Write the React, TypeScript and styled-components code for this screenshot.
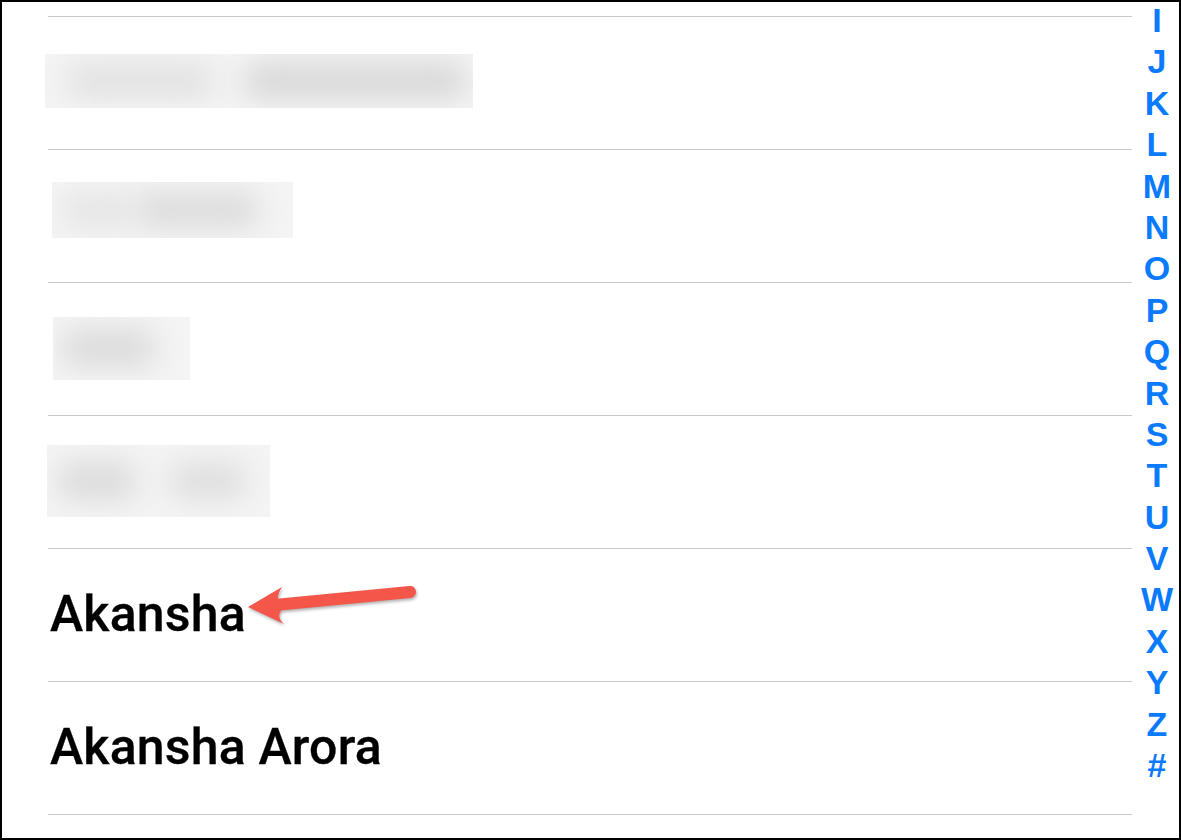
import React from "react";
import styled, { createGlobalStyle } from "styled-components";

const Global = createGlobalStyle`
  html, body { margin: 0; padding: 0; background: #fff; }
  body { font-family: "Liberation Sans", Arial, sans-serif; }
`;

const Frame = styled.div`
  box-sizing: border-box;
  width: 1181px;
  height: 840px;
  border: 2px solid #000;
  background: #fff;
  display: flex;
  overflow: hidden;
`;

const List = styled.div`
  width: 1084px;
  margin-left: 46px;
  padding-top: 14px;
  display: flex;
  flex-direction: column;
`;

const Row = styled.div`
  position: relative;
  box-sizing: border-box;
  height: 133px;
  flex: none;
  border-top: 1px solid #c8c8cb;
  display: flex;
  align-items: center;
  &:last-child {
    height: 134px;
    border-bottom: 1px solid #c8c8cb;
  }
`;

const Name = styled.span`
  font-family: Roboto, "Liberation Sans", sans-serif;
  font-weight: 500;
  font-size: 50px;
  line-height: 1;
  color: #000;
  margin-left: 2px;
  margin-top: -2px;
  letter-spacing: 0.2px;
  -webkit-text-stroke: 0.3px #000;
`;

const BlurBox = styled.div<{ $w: number; $h: number; $x: number; $y: number }>`
  width: ${(p) => p.$w}px;
  height: ${(p) => p.$h}px;
  margin-left: ${(p) => p.$x}px;
  margin-top: ${(p) => p.$y}px;
  background: #f4f4f4;
  overflow: hidden;
  display: flex;
  align-items: center;
`;

const Blob = styled.span<{ $w: number; $h: number; $gap: number; $c: string }>`
  flex: none;
  width: ${(p) => p.$w}px;
  height: ${(p) => p.$h}px;
  margin-left: ${(p) => p.$gap}px;
  background: ${(p) => p.$c};
  border-radius: 18px;
  filter: blur(14px);
`;

const Index = styled.div`
  width: 47px;
  padding-left: 3px;
  box-sizing: border-box;
  margin-top: -2px;
  display: flex;
  flex-direction: column;
  align-items: center;
`;

const Letter = styled.span`
  font-family: "Liberation Sans", Arial, sans-serif;
  font-weight: 700;
  font-size: 34px;
  line-height: 41.4px;
  height: 41.4px;
  color: #0a7aff;
`;

const ArrowSvg = styled.svg`
  position: absolute;
  left: 192px;
  top: 26px;
  overflow: visible;
  filter: drop-shadow(1px 2px 1.5px rgba(0, 0, 0, 0.3));
`;

const letters = "IJKLMNOPQRSTUVWXYZ#".split("");

function Arrow() {
  return (
    <ArrowSvg width="190" height="60" viewBox="0 0 190 60">
      <line x1="40" y1="29.5" x2="170" y2="17" stroke="#f4574a" strokeWidth="12" strokeLinecap="round" />
      <path d="M8 32 L42 12 Q35 22 40 29 L41 36 Q36 42 44 49 Z" fill="#f4574a" />
    </ArrowSvg>
  );
}

export default function App() {
  return (
    <>
      <Global />
      <Frame>
        <List>
          <Row>
            <BlurBox $w={428} $h={54} $x={-3} $y={-5}>
              <Blob $w={150} $h={36} $gap={20} $c="#e2e2e2" />
              <Blob $w={225} $h={38} $gap={28} $c="#d9d9d9" />
            </BlurBox>
          </Row>
          <Row>
            <BlurBox $w={241} $h={56} $x={4} $y={-12}>
              <Blob $w={75} $h={34} $gap={8} $c="#e5e5e5" />
              <Blob $w={125} $h={36} $gap={0} $c="#dcdcdc" />
            </BlurBox>
          </Row>
          <Row>
            <BlurBox $w={137} $h={63} $x={5} $y={-2}>
              <Blob $w={95} $h={40} $gap={8} $c="#dcdcdc" />
            </BlurBox>
          </Row>
          <Row>
            <BlurBox $w={223} $h={72} $x={-1} $y={-3}>
              <Blob $w={80} $h={40} $gap={10} $c="#dcdcdc" />
              <Blob $w={78} $h={38} $gap={32} $c="#dfdfdf" />
            </BlurBox>
          </Row>
          <Row>
            <Name>Akansha</Name>
            <Arrow />
          </Row>
          <Row>
            <Name>Akansha Arora</Name>
          </Row>
        </List>
        <Index>
          {letters.map((l) => (
            <Letter key={l}>{l}</Letter>
          ))}
        </Index>
      </Frame>
    </>
  );
}
